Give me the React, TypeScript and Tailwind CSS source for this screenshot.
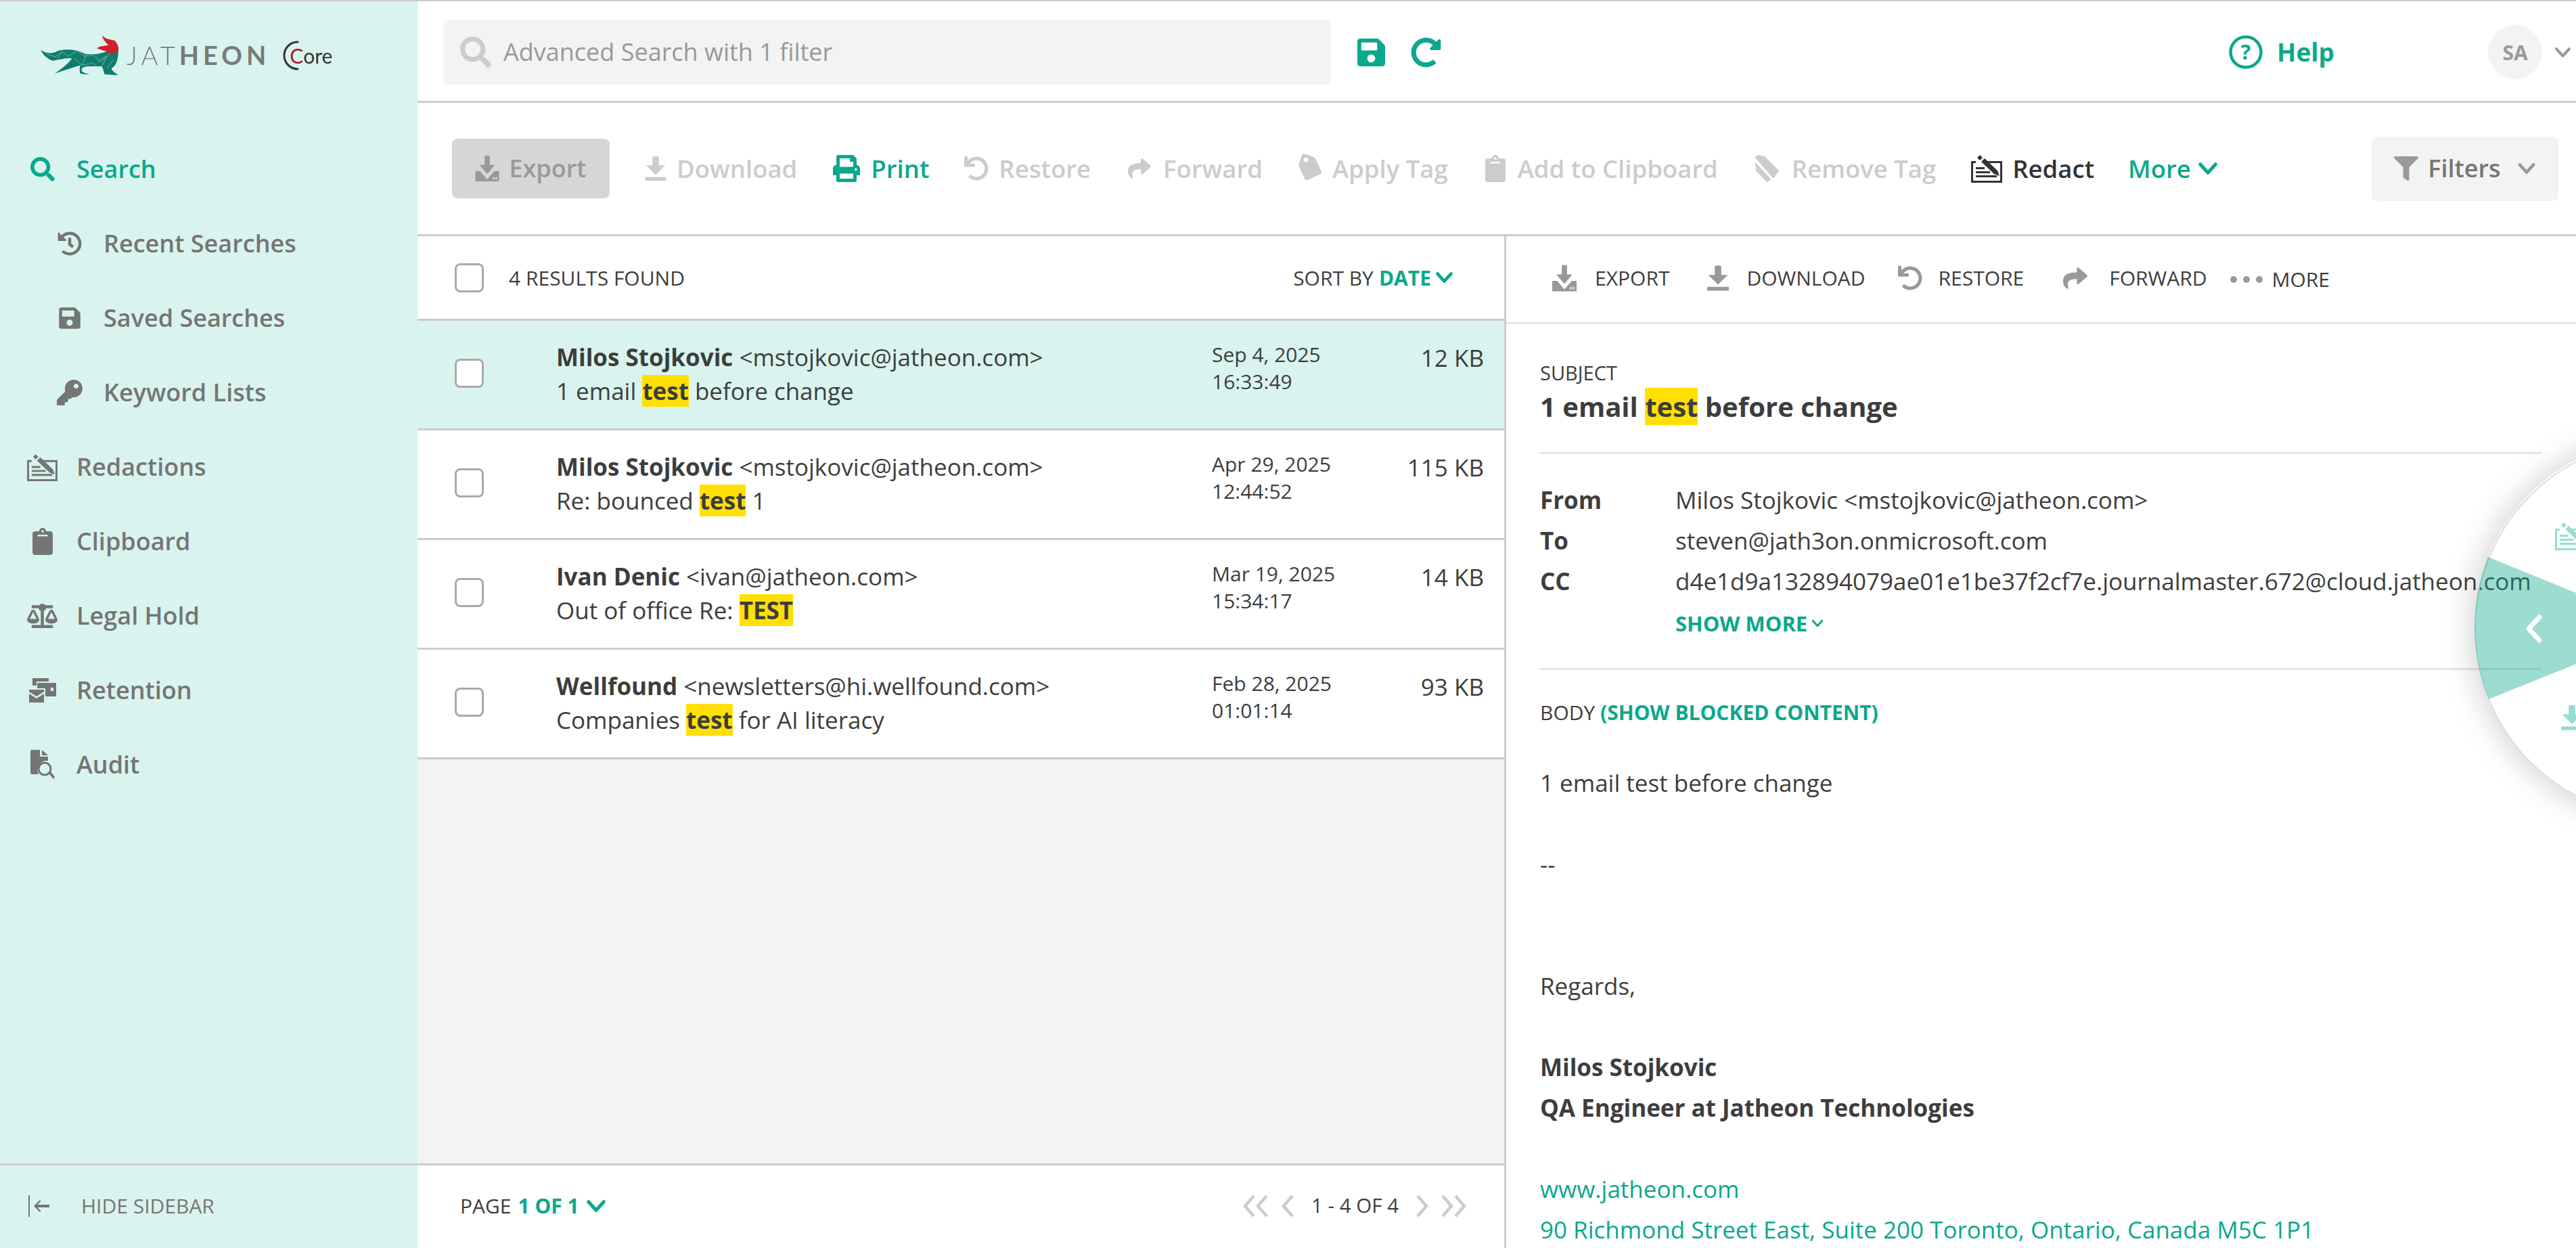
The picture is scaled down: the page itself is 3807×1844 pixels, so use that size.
import type { ReactNode } from "react";
import {
  FaBalanceScale,
  FaClipboard,
  FaFilter,
  FaHistory,
  FaKey,
  FaPrint,
  FaRedoAlt,
  FaSave,
  FaSearch,
  FaShare,
  FaTag,
  FaUndo,
} from "react-icons/fa";

const Chevron = ({ className = "" }: { className?: string }) => (
  <svg viewBox="0 0 24 16" className={className} fill="none">
    <path d="M3 3l9 10 9-10" stroke="currentColor" strokeWidth="4" strokeLinecap="round" strokeLinejoin="round" />
  </svg>
);

const PagerArrow = ({ flip = false, double = false }: { flip?: boolean; double?: boolean }) => (
  <svg viewBox={double ? "0 0 40 34" : "0 0 22 34"} className={`h-[34px] ${double ? "w-[40px]" : "w-[22px]"} ${flip ? "-scale-x-100" : ""}`} fill="none">
    <path d="M18 2L5 17l13 15" stroke="currentColor" strokeWidth="4.500" />
    {double && <path d="M37 2L24 17l13 15" stroke="currentColor" strokeWidth="4.500" />}
  </svg>
);

const RedactIcon = ({ className = "" }: { className?: string }) => (
  <svg viewBox="0 0 46 42" className={className} fill="currentColor">
    <path d="M17 10h29v32H0V10h7v3H3v26h40V13H20z" />
    <path d="M15 11l5-5 19 18 3 8-8-3z" />
    <path d="M9 5l4-4 4 4-4 4z" />
    <path d="M7 19h13v3H7zM7 25h21v3H7zM7 31h31v3H7z" />
  </svg>
);

const ExportIcon = ({ className = "" }: { className?: string }) => (
  <svg viewBox="0 0 46 50" className={className} fill="currentColor">
    <path d="M18 2a2 2 0 012-2h6a2 2 0 012 2v16h10L23 36 8 18h10z" />
    <path d="M0 30h9l14 16 14-16h9v20H0z" />
    <path d="M34 42h3v4h-3zM39 42h3v4h-3z" fill="#fff" opacity=".8" />
  </svg>
);

const DownloadIcon = ({ className = "" }: { className?: string }) => (
  <svg viewBox="0 0 40 46" className={className} fill="currentColor">
    <path d="M14 2a2 2 0 012-2h8a2 2 0 012 2v15h12L20 35 2 17h12z" />
    <path d="M0 39h40v7H0z" />
  </svg>
);

const RemoveTagIcon = ({ className = "" }: { className?: string }) => (
  <svg viewBox="0 0 42 46" className={className} fill="currentColor">
    <path d="M0 4l4-4 12 2 25 25-10 13z" />
    <path d="M0 12l27 29-5 5-4-2L2 27z" />
  </svg>
);

const RetentionIcon = ({ className = "" }: { className?: string }) => (
  <svg viewBox="0 0 40 36" className={className} fill="currentColor">
    <path d="M5 0h24v5H11v6H5z" />
    <path d="M12 7h28v20H24V15H12zM32 14v5h4v-5z" />
    <path d="M0 17h22v3L11 27 0 20zM0 23l11 7 11-7v13H0z" />
  </svg>
);

const AuditIcon = ({ className = "" }: { className?: string }) => (
  <svg viewBox="0 0 36 44" className={className} fill="currentColor">
    <path d="M0 2a2 2 0 012-2h12v10h12v6a14 14 0 00-14 20H2a2 2 0 01-2-2z" />
    <path d="M17 0l9 8h-9z" />
    <circle cx="21" cy="28" r="9" fill="none" stroke="currentColor" strokeWidth="3" />
    <path d="M27 35l3-3 6 8-2 3z" />
  </svg>
);

const HideIcon = ({ className = "" }: { className?: string }) => (
  <svg viewBox="0 0 32 32" className={className} fill="currentColor">
    <path d="M0 0h2v32H0z" />
    <path d="M8 16l9-9 1.500 1.500-5 5.500H31v4H13.500l5 5.500L17 25z" />
  </svg>
);

function Logo() {
  return (
    <div className="flex items-center">
      <svg viewBox="50 60 360 190" className="w-[120px] h-[63px] shrink-0">
        <path
          fill="#0f7d6b"
          d="M55 132c25 18 55 18 80 3 35-10 85-5 115 13 30 7 70 2 95-8l57-15c0 45-7 75-32 90 10 17 25 23 32 30l-62-5c-5-20-10-35-15-35h-55c-25 0-35 10-32 20 7 10 32 13 37 17l-43-4c-4-16-4-28 0-38-32 10-82 25-114 37 32-22 52-37 77-67-25-5-55 5-85 10-20-5-40-20-55-48z"
        />
        <path
          fill="none"
          stroke="#bfe8df"
          strokeWidth="1.500"
          d="M80 150l40 12 30-22 30 20 40-25 30 25 40-5 30 30 50-40M260 150l-20 50 50-10 30 30 30-60-40 20M205 170l35 30M150 140l-20 30M350 215l30-40"
        />
        <path
          fill="#d01f2f"
          d="M330 67c15 18 35 18 55 23 15 15 18 30 17 40-7 15-22 22-40 18-10-13-32-13-56-23 14-13 39-10 52-15-13-10-26-25-28-43z"
        />
      </svg>
      <div className="ml-[9px] -mt-[2px] flex text-[38px] leading-none font-['Lato',sans-serif] text-[#7a7a7a] tracking-[6px]">
        <span className="font-light">JAT</span>
        <span className="font-bold">HEON</span>
      </div>
      <div className="relative ml-[17px] flex items-center pl-[12px] text-[30px] leading-none font-['Lato',sans-serif] text-[#333]">
        <svg viewBox="0 0 30 46" className="absolute left-0 top-[-8px] w-[30px] h-[46px]" fill="none">
          <path d="M24 3a20 20 0 000 40" stroke="#333" strokeWidth="3" strokeLinecap="round" />
        </svg>
        <span className="text-[#a3202f]">C</span>
        <span>ore</span>
      </div>
    </div>
  );
}

type NavItem = { label: string; icon: ReactNode; sub?: boolean; active?: boolean };

const nav: NavItem[] = [
  { label: "Search", icon: <FaSearch className="w-[36px] h-[36px]" />, active: true },
  { label: "Recent Searches", icon: <FaHistory className="w-[36px] h-[36px]" />, sub: true },
  { label: "Saved Searches", icon: <FaSave className="w-[36px] h-[36px]" />, sub: true },
  { label: "Keyword Lists", icon: <FaKey className="w-[38px] h-[38px]" />, sub: true },
  { label: "Redactions", icon: <RedactIcon className="w-[45px] h-[41px]" /> },
  { label: "Clipboard", icon: <FaClipboard className="w-[30px] h-[40px]" /> },
  { label: "Legal Hold", icon: <FaBalanceScale className="w-[45px] h-[36px]" /> },
  { label: "Retention", icon: <RetentionIcon className="w-[40px] h-[36px]" /> },
  { label: "Audit", icon: <AuditIcon className="w-[36px] h-[44px]" /> },
];

function Sidebar() {
  return (
    <aside className="w-[617px] shrink-0 bg-[#d9f4ef] flex flex-col">
      <div className="h-[193px] pl-[58px] pt-[48px]">
        <Logo />
      </div>
      <nav className="flex-1">
        {nav.map((item) => (
          <div
            key={item.label}
            className={`h-[110px] flex items-center gap-[28px] text-[36px] font-semibold ${item.sub ? "pl-[80px]" : "pl-[40px]"} ${item.active ? "text-[#0aa88c]" : "text-[#757575]"}`}
          >
            <span className="w-[45px] flex justify-center">{item.icon}</span>
            {item.label}
          </div>
        ))}
      </nav>
      <div className="h-[125px] border-t-[3px] border-[#ccc] flex items-center pb-[3px] pl-[42px] gap-[46px] text-[30px] text-[#757575]">
        <HideIcon className="w-[32px] h-[32px]" />
        HIDE SIDEBAR
      </div>
    </aside>
  );
}

function TopBar() {
  return (
    <div className="h-[150px] shrink-0 flex items-center border-b-[3px] border-[#ccc] pl-[38px] pt-[3px]">
      <div className="w-[1312px] h-[95px] bg-[#f3f3f3] rounded-[8px] flex items-center pl-[25px] gap-[18px] text-[36px] text-[#999]">
        <FaSearch className="w-[46px] h-[46px] text-[#ccc]" />
        Advanced Search with 1 filter
      </div>
      <FaSave className="ml-[36px] w-[47px] h-[47px] text-[#0aa88c]" />
      <FaRedoAlt className="ml-[35px] w-[45px] h-[45px] text-[#0aa88c]" />
      <div className="ml-auto flex items-center gap-[21px] text-[#0aa88c] text-[37px] font-bold">
        <svg viewBox="0 0 50 50" className="w-[50px] h-[50px]" fill="none">
          <circle cx="25" cy="25" r="22.500" stroke="currentColor" strokeWidth="4.500" />
          <text x="25" y="36" textAnchor="middle" fontSize="31" fontWeight="700" fill="currentColor">?</text>
        </svg>
        Help
      </div>
      <div className="ml-[227px] w-[80px] h-[80px] rounded-full bg-[#f3f3f3] flex items-center justify-center text-[30px] font-bold text-[#999]">
        SA
      </div>
      <Chevron className="ml-[18px] mr-[7px] w-[25px] h-[17px] text-[#999]" />
    </div>
  );
}

type Act = { label: string; icon: ReactNode; tone: string };
const muted = "text-[#ccc]";

const actions: Act[] = [
  { label: "Download", icon: <DownloadIcon className="w-[32px] h-[36px]" />, tone: muted },
  { label: "Print", icon: <FaPrint className="w-[42px] h-[40px]" />, tone: "text-[#0aa88c]" },
  { label: "Restore", icon: <FaUndo className="w-[36px] h-[36px]" />, tone: muted },
  { label: "Forward", icon: <FaShare className="w-[40px] h-[34px]" />, tone: muted },
  { label: "Apply Tag", icon: <FaTag className="w-[36px] h-[36px] rotate-[20deg]" />, tone: muted },
  { label: "Add to Clipboard", icon: <FaClipboard className="w-[36px] h-[40px]" />, tone: muted },
  { label: "Remove Tag", icon: <RemoveTagIcon className="w-[42px] h-[40px]" />, tone: muted },
  { label: "Redact", icon: <RedactIcon className="w-[46px] h-[42px]" />, tone: "text-[#333]" },
];

function Toolbar() {
  return (
    <div className="h-[197px] shrink-0 flex items-center border-b-[3px] border-[#ccc] pl-[51px] pr-[26px]">
      <div className="w-[233px] h-[88px] bg-[#d6d6d6] rounded-[8px] flex items-center justify-center gap-[14px] text-[36px] font-semibold text-[#999]">
        <ExportIcon className="w-[36px] h-[38px]" />
        Export
      </div>
      {actions.map((a) => (
        <div key={a.label} className={`ml-[52px] flex items-center gap-[15px] text-[36.5px] font-semibold ${a.tone}`}>
          {a.icon}
          {a.label}
        </div>
      ))}
      <div className="ml-[50px] flex items-center gap-[10px] text-[36.5px] font-semibold text-[#0aa88c]">
        More
        <Chevron className="w-[30px] h-[20px]" />
      </div>
      <div className="ml-auto w-[276px] h-[95px] bg-[#f3f3f3] rounded-[8px] flex items-center justify-center gap-[14px] text-[36px] font-semibold text-[#757575]">
        <FaFilter className="w-[36px] h-[36px] text-[#999]" />
        Filters
        <Chevron className="ml-[10px] w-[28px] h-[18px] text-[#999]" />
      </div>
    </div>
  );
}

const Hit = ({ children }: { children: ReactNode }) => (
  <mark className="bg-[#ffe000] text-[#3d3d3d] font-bold">{children}</mark>
);

const CheckBox = () => (
  <span className="block w-[43px] h-[43px] rounded-[8px] border-[3px] border-[#aaa] bg-white shrink-0" />
);

const results = [
  { name: "Milos Stojkovic", mail: "<mstojkovic@jatheon.com>", subject: <>1 email <Hit>test</Hit> before change</>, date: "Sep 4, 2025", time: "16:33:49", size: "12 KB", active: true },
  { name: "Milos Stojkovic", mail: "<mstojkovic@jatheon.com>", subject: <>Re: bounced <Hit>test</Hit> 1</>, date: "Apr 29, 2025", time: "12:44:52", size: "115 KB" },
  { name: "Ivan Denic", mail: "<ivan@jatheon.com>", subject: <>Out of office Re: <Hit>TEST</Hit></>, date: "Mar 19, 2025", time: "15:34:17", size: "14 KB" },
  { name: "Wellfound", mail: "<newsletters@hi.wellfound.com>", subject: <>Companies <Hit>test</Hit> for AI literacy</>, date: "Feb 28, 2025", time: "01:01:14", size: "93 KB" },
];

function ResultList() {
  return (
    <section className="w-[1609px] shrink-0 border-r-[3px] border-[#ccc] flex flex-col bg-[#f3f3f3] text-[#3d3d3d]">
      <div className="h-[125px] shrink-0 bg-white border-b-[3px] border-[#ccc] flex items-center pl-[55px] pr-[75px] text-[30px]">
        <CheckBox />
        <span className="ml-[37px]">4 RESULTS FOUND</span>
        <span className="ml-auto">SORT BY</span>
        <span className="ml-[8px] font-bold text-[#0aa88c]">DATE</span>
        <Chevron className="ml-[6px] w-[27px] h-[18px] text-[#0aa88c]" />
      </div>
      {results.map((r, i) => (
        <div
          key={i}
          className={`h-[162px] shrink-0 border-b-[3px] border-[#ccc] flex items-center pl-[55px] pr-[30px] ${r.active ? "bg-[#d9f4ef]" : "bg-white"}`}
        >
          <span className="-mt-[5px]">
            <CheckBox />
          </span>
          <div className="ml-[107px] w-[969px] text-[35px] leading-[50px] -mt-[2px]">
            <div>
              <b className="font-bold">{r.name}</b> {r.mail}
            </div>
            <div>{r.subject}</div>
          </div>
          <div className="text-[30px] leading-[40px] -mt-[20px]">
            <div>{r.date}</div>
            <div>{r.time}</div>
          </div>
          <div className="ml-auto self-start mt-[30px] text-[35px] leading-[50px]">{r.size}</div>
        </div>
      ))}
      <div className="flex-1" />
      <div className="h-[125px] shrink-0 bg-white border-t-[3px] border-[#ccc] flex items-center pb-[3px] pl-[63px] pr-[54px] text-[30px]">
        PAGE
        <span className="ml-[10px] font-bold text-[#0aa88c]">1 OF 1</span>
        <Chevron className="ml-[10px] w-[30px] h-[20px] text-[#0aa88c]" />
        <div className="ml-auto flex items-center text-[#ccc]">
          <PagerArrow double />
          <span className="ml-[17px]">
            <PagerArrow />
          </span>
          <span className="mx-[24px] text-[29.5px] text-[#3d3d3d]">1 - 4 OF 4</span>
          <PagerArrow flip />
          <span className="ml-[16px]">
            <PagerArrow flip double />
          </span>
        </div>
      </div>
    </section>
  );
}

const detailActions = [
  { label: "EXPORT", icon: <ExportIcon className="w-[36px] h-[40px]" />, cls: "mr-[56px] gap-[27px]" },
  { label: "DOWNLOAD", icon: <DownloadIcon className="w-[32px] h-[40px]" />, cls: "mr-[48px] gap-[26px]" },
  { label: "RESTORE", icon: <FaUndo className="w-[36px] h-[36px]" />, cls: "mr-[56px] gap-[24px]" },
  { label: "FORWARD", icon: <FaShare className="w-[40px] h-[36px]" />, cls: "mr-[34px] gap-[30px]" },
];

const Line = ({ children }: { children?: ReactNode }) => <div className="h-[60px] leading-[60px]">{children}</div>;

function Detail() {
  return (
    <section className="flex-1 min-w-0 text-[#3d3d3d] overflow-hidden">
      <div className="h-[130px] border-b-[3px] border-[#e5e5e5] flex items-center pl-[68px] pb-[4px] text-[30px]">
        {detailActions.map((a) => (
          <div key={a.label} className={`flex items-center ${a.cls}`}>
            <span className="text-[#999]">{a.icon}</span>
            {a.label}
          </div>
        ))}
        <div className="flex items-center gap-[14px] mt-[4px]">
          <span className="flex gap-[9px]">
            <i className="w-[10px] h-[10px] rounded-full bg-[#999]" />
            <i className="w-[10px] h-[10px] rounded-full bg-[#999]" />
            <i className="w-[10px] h-[10px] rounded-full bg-[#999]" />
          </span>
          MORE
        </div>
      </div>
      <div className="pl-[50px] pr-[51px]">
        <div className="h-[192px] border-b-[3px] border-[#e5e5e5] pt-[54px]">
          <div className="text-[29px] leading-[36px] mb-[2px]">SUBJECT</div>
          <div className="text-[40px] leading-[60px] font-bold">
            1 email <Hit>test</Hit> before change
          </div>
        </div>
        <div className="h-[319px] border-b-[3px] border-[#e5e5e5] pt-[38px] text-[35px]">
          {[
            ["From", "Milos Stojkovic <mstojkovic@jatheon.com>"],
            ["To", "steven@jath3on.onmicrosoft.com"],
            ["CC", "d4e1d9a132894079ae01e1be37f2cf7e.journalmaster.672@cloud.jatheon.com"],
          ].map(([k, v]) => (
            <div key={k} className="flex h-[60px] leading-[60px]">
              <b className="w-[200px] shrink-0 font-bold">{k}</b>
              <span className="whitespace-nowrap">{v}</span>
            </div>
          ))}
          <div className="ml-[200px] mt-[2px] flex items-center h-[60px] gap-[6px] text-[31px] font-bold text-[#0aa88c]">
            SHOW MORE
            <Chevron className="w-[18px] h-[12px]" />
          </div>
        </div>
        <div className="pt-[43px] text-[30px] leading-[40px]">
          BODY <span className="font-bold text-[#0aa88c]">(SHOW BLOCKED CONTENT)</span>
        </div>
        <div className="mt-[54px] text-[35px]">
          <Line>1 email test before change</Line>
          <Line />
          <Line>--</Line>
          <Line />
          <Line />
          <Line>Regards,</Line>
          <Line />
          <Line><b>Milos Stojkovic</b></Line>
          <Line><b>QA Engineer at Jatheon Technologies</b></Line>
          <Line />
          <Line><span className="text-[#0aa88c]">www.jatheon.com</span></Line>
          <Line><span className="text-[#0aa88c]">90 Richmond Street East, Suite 200 Toronto, Ontario, Canada M5C 1P1</span></Line>
        </div>
      </div>
    </section>
  );
}

// the round quick-action menu hanging over the right edge
function RadialMenu() {
  return (
    <div className="absolute left-[3657px] top-[647px] w-[560px] h-[560px] rounded-full shadow-[0_0_50px_rgba(0,0,0,0.22)]">
      <svg viewBox="0 0 560 560" className="w-[560px] h-[560px]">
        <path d="M280 280L20 174A280 280 0 01560 280V280A280 280 0 0121 384Z" fill="#fff" />
        <circle cx="280" cy="280" r="279" fill="none" stroke="#ddd" strokeWidth="2" />
        <path d="M280 280L20 174A280 280 0 0021 384Z" fill="#0aa88c" fillOpacity=".4" />
        <path d="M96 263L80 280l16 17" fill="none" stroke="#fff" strokeWidth="7" strokeLinecap="round" strokeLinejoin="round" />
        <g transform="translate(119 122)" fill="#9adcd1">
          <path d="M17 10h29v32H0V10h7v3H3v26h40V13H20z" />
          <path d="M15 11l5-5 19 18 3 8-8-3z" />
          <path d="M9 5l4-4 4 4-4 4z" />
          <path d="M7 19h13v3H7zM7 25h21v3H7zM7 31h31v3H7z" />
        </g>
        <g transform="translate(128 393) scale(.8)" fill="#9adcd1">
          <path d="M14 2a2 2 0 012-2h8a2 2 0 012 2v15h12L20 35 2 17h12z" />
          <path d="M0 39h40v7H0z" />
        </g>
      </svg>
    </div>
  );
}

export default function App() {
  return (
    <div className="relative h-screen w-full overflow-hidden flex bg-white border-t-[2px] border-[#ccc] font-['Open_Sans',sans-serif]">
      <Sidebar />
      <main className="flex-1 min-w-0 flex flex-col">
        <TopBar />
        <Toolbar />
        <div className="flex-1 min-h-0 flex">
          <ResultList />
          <Detail />
        </div>
      </main>
      <RadialMenu />
    </div>
  );
}
